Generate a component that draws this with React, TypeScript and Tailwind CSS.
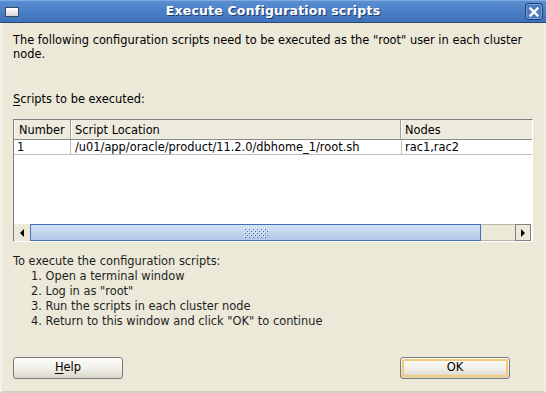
import React from "react";

const font = "font-['DejaVu_Sans','Liberation_Sans',sans-serif]";

function Btn({ children, focus }: { children: React.ReactNode; focus?: boolean }) {
  return (
    <div className="h-[22px] w-[110px] rounded-[3px] border border-[#7A7A7A] bg-linear-to-b from-[#FCFCFA] via-[#F1F0EA] to-[#D9D6C8] p-px">
      <div
        className={
          "flex h-full w-full items-center justify-center rounded-[2px] text-[11.5px] text-black " +
          (focus ? "border-2 border-[#F3C97A]" : "")
        }
      >
        {children}
      </div>
    </div>
  );
}

function Grip() {
  const dots: React.ReactNode[] = [];
  for (let r = 0; r < 5; r++) {
    for (let c = 0; c < 6; c++) {
      const x = c * 4 + (r % 2 ? 2 : 0);
      const y = r * 2;
      dots.push(<rect key={`${r}-${c}`} x={x} y={y} width="1" height="1" fill="#3A64B0" />);
      dots.push(<rect key={`w${r}-${c}`} x={x - 1} y={y - 1} width="1" height="1" fill="#FFFFFF" opacity="0.8" />);
    }
  }
  return (
    <svg width="24" height="10" viewBox="-1 -1 24 10">
      {dots}
    </svg>
  );
}

export default function App() {
  return (
    <div className={"flex h-[393px] w-[546px] flex-col overflow-hidden bg-[#ECE9D8] " + font}>
      {/* Title bar */}
      <div className="relative flex h-[22px] items-center justify-center border-t border-[#7FAAE2] bg-linear-to-b from-[#5A8ED2] to-[#3D71B9]">
        <div className="absolute left-[5px] top-[6px] h-[10px] w-[14px] border border-[#3B4A5E] bg-linear-to-b from-[#FFFFFF] to-[#D6D6D6]" />
        <span className="text-[12.5px] font-bold tracking-[0.2px] text-white [text-shadow:1px_1px_0_#1E3C6E]">
          Execute Configuration scripts
        </span>
        <div className="absolute right-[3px] top-[2px] flex h-[17px] w-[18px] items-center justify-center rounded-[3px] border border-[#1F3F72] bg-[#4A7CC2] shadow-[inset_0_0_0_1px_#7DA3D8]">
          <svg width="10" height="10" viewBox="0 0 10 10">
            <path d="M1.5 1.5 L8.5 8.5 M8.5 1.5 L1.5 8.5" stroke="white" strokeWidth="2.4" strokeLinecap="square" />
          </svg>
        </div>
      </div>
      <div className="h-px bg-[#2B4670]" />

      {/* Body */}
      <div className="flex flex-1 flex-col border-x-[2px] border-b-[2px] border-x-[#F3F1E8] border-b-[#D2CEC2] pl-[11px] pr-[11px] pt-[10px]">
        <p className="text-[11.4px] leading-[14px] text-black">
          The following configuration scripts need to be executed as the "root" user in each cluster
          <br />
          node.
        </p>
        <div className="mt-[31px] text-[11.4px] leading-[14px] text-black">
          <span className="underline underline-offset-2">S</span>cripts to be executed:
        </div>

        {/* Table */}
        <div className="mt-[13px] flex h-[123px] w-[520px] flex-col border border-b-white border-l-[#7F7F7F] border-r-white border-t-[#7F7F7F] bg-white text-[11.4px] text-black">
          <div className="flex h-[20px] border-b border-[#8A8A8A] bg-[#EEEBDE]">
            <div className="flex w-[57px] items-center border-l border-r border-l-white border-r-[#9C9C9C] pl-[4px] pt-[2px]">Number</div>
            <div className="flex w-[330px] items-center border-l border-r border-l-white border-r-[#9C9C9C] pl-[3px] pt-[2px]">Script Location</div>
            <div className="flex w-[130px] items-center border-l border-l-white pl-[3px] pt-[2px]">Nodes</div>
          </div>
          <div className="flex h-[15px] border-b border-[#BDBDBD]">
            <div className="flex w-[57px] items-center border-r border-[#BDBDBD] pl-[3px] pt-[1px]">1</div>
            <div className="flex w-[331px] items-center border-r border-[#BDBDBD] pl-[4px] pt-[1px]">/u01/app/oracle/product/11.2.0/dbhome_1/root.sh</div>
            <div className="flex w-[130px] items-center pl-[3px] pt-[1px]">rac1,rac2</div>
          </div>
          <div className="flex-1" />
          {/* Horizontal scrollbar */}
          <div className="flex h-[17px]">
            <div className="flex w-[16px] items-center justify-center bg-[#ECE9D8]">
              <svg width="5" height="8" viewBox="0 0 5 8">
                <path d="M4 0 L0 4 L4 8 Z" fill="black" />
              </svg>
            </div>
            <div className="flex w-[451px] items-center justify-center border border-[#4470B5] bg-linear-to-b from-[#D6E3F4] to-[#B3C9E8]">
              <Grip />
            </div>
            <div className="w-[34px] border-y border-[#B8B6A8] bg-[#ECE9D8]" />
            <div className="flex w-[16px] items-center justify-center border border-[#808080] bg-[#ECE9D8]">
              <svg width="5" height="8" viewBox="0 0 5 8">
                <path d="M0 0 L4 4 L0 8 Z" fill="black" />
              </svg>
            </div>
          </div>
        </div>

        {/* Instructions */}
        <div className="mt-[12px] text-[11.4px] leading-[15px] text-[#1E1E1E]">
          <div>To execute the configuration scripts:</div>
          <div className="pl-[18px]">1. Open a terminal window</div>
          <div className="pl-[18px]">2. Log in as "root"</div>
          <div className="pl-[18px]">3. Run the scripts in each cluster node</div>
          <div className="pl-[18px]">4. Return to this window and click "OK" to continue</div>
        </div>

        <div className="flex-1" />
        {/* Buttons */}
        <div className="mb-[12px] flex items-center justify-between pr-[23px]">
          <Btn>
            <span>
              <span className="underline underline-offset-2">H</span>elp
            </span>
          </Btn>
          <Btn focus>OK</Btn>
        </div>
      </div>
    </div>
  );
}
